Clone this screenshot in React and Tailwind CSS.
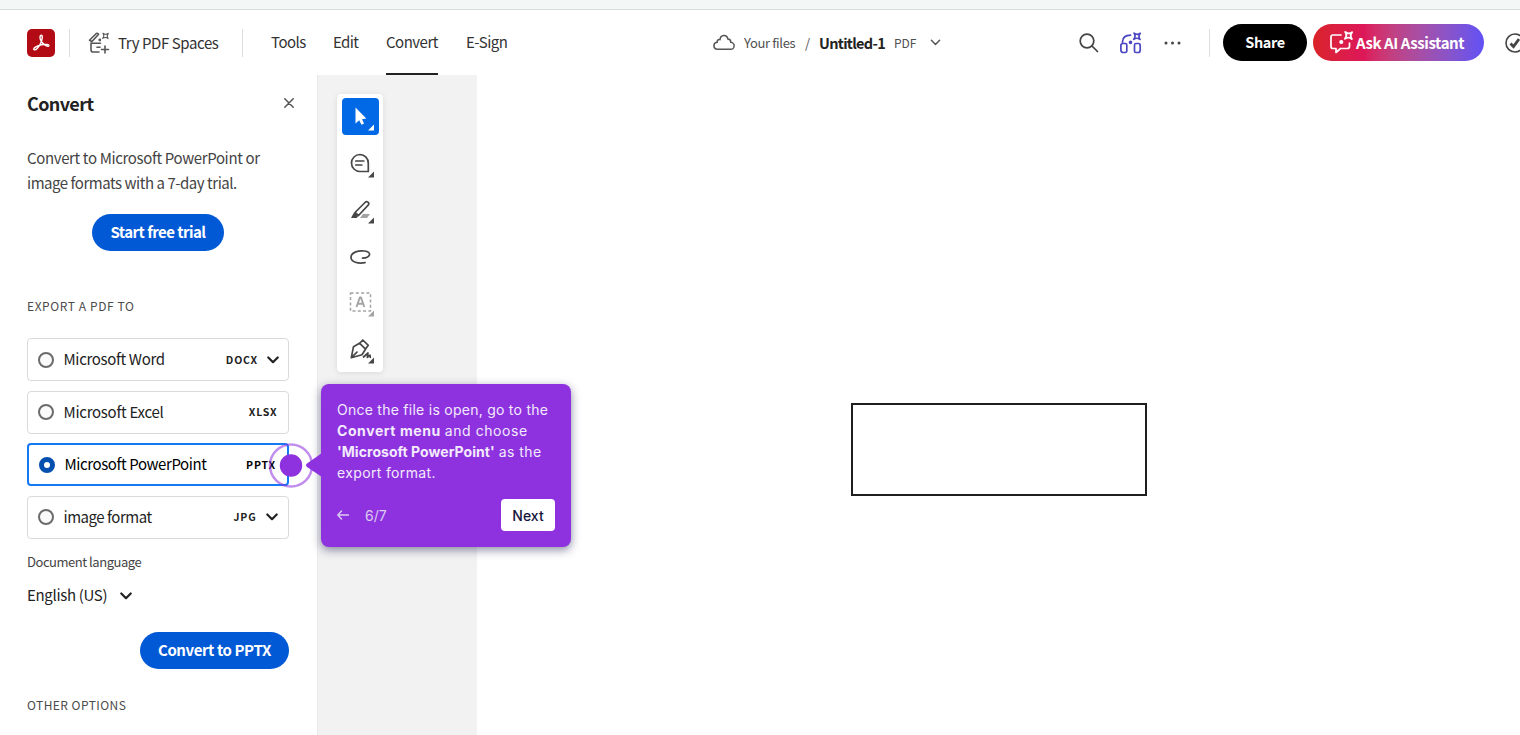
function T({ className = "", children }) {
  return <span className={"whitespace-nowrap " + className}>{children}</span>;
}

function Chevron({ className = "", width = 2.2 }) {
  return (
    <svg viewBox="0 0 12 8" className={"shrink-0 " + className} fill="none" stroke="currentColor" strokeWidth={width} strokeLinecap="round" strokeLinejoin="round">
      <path d="M1.3 1.5 6 6.2l4.7-4.7" />
    </svg>
  );
}

function Sparkle({ x, y, s = 1 }) {
  return <path transform={`translate(${x} ${y}) scale(${s})`} d="M-3-3.200Q0-.8 3.300-3 .8 0 3 3.200 0 .8-3.300 3-.8 0-3-3.200Z" />;
}

function Tool({ children, active, muted, corner = true }) {
  const tone = active ? "bg-[#0269e6] text-white" : muted ? "text-[#a3a3a3]" : "text-[#474747]";
  return (
    <button className={"block h-[37px] w-[37px] rounded-[4px] " + tone}>
      <svg width="37" height="37" viewBox="0 0 37 37" fill="none" stroke="currentColor" strokeWidth="1.7" strokeLinecap="round" strokeLinejoin="round">
        {children}
        {corner && <path d="M32 26.500v6h-6z" fill="currentColor" stroke="none" />}
      </svg>
    </button>
  );
}

function Option({ label, track, fmt, selected, chevron, chevronEnd = "" }) {
  const frame = selected ? "border-2 border-[#147af3] text-black px-[10px]" : "border border-[#dadada] text-[#222] pl-[10px] pr-[9px]";
  return (
    <div className={"flex h-[43px] w-[262px] items-center rounded-[4px] bg-white " + frame}>
      <span className={"h-4 w-4 shrink-0 rounded-full " + (selected ? "border-[5.5px] border-[#0550af] bg-white" : "border-2 border-[#6b6b6b] bg-[#fafafa]")} />
      <T className={"ml-[9.5px] text-[15px] " + track}>{label}</T>
      <T className={"ml-auto text-[10.5px] font-bold tracking-[0.8px] " + (chevron ? "" : selected ? "pr-px" : "pr-[1.5px]")}>{fmt}</T>
      {chevron && <Chevron className={"ml-[9px] h-2 w-3 " + chevronEnd} />}
    </div>
  );
}

export default function App() {
  return (
    <div className="relative flex h-[735px] w-[1520px] flex-col overflow-hidden bg-white font-['Noto_Sans_CJK_SC','Noto_Sans',sans-serif] text-[#333]">
      <div className="h-[10px] shrink-0 border-b border-[#d5dfdd] bg-[#f3f8f7]" />
      <header className="flex h-[65px] shrink-0 items-center overflow-hidden pl-[27px] *:shrink-0">
        <svg className="h-7 w-7" viewBox="0 0 28 28">
          <rect width="28" height="28" rx="5" fill="#b30b16" />
          <path d="M14.200 6.300c1.700-.2 1.200 3.800-.2 7.100-1.700 3.900-5.100 8.500-6.900 7.300-1.700-1.300 2.800-4.100 7.500-4.900 4.400-.7 7.500-.5 7.300.9-.4 1.900-4.900-.7-7.200-3.700-2-2.700-2.400-6.400-.5-6.700Z" fill="none" stroke="#fff" strokeWidth="1.400" />
        </svg>
        <i className="ml-[14px] h-7 w-px bg-[#dcdcdc]" />
        <svg className="ml-[18px] h-[22px] w-[22px]" viewBox="0 0 22 22" fill="none" stroke="#555" strokeWidth="1.600" strokeLinecap="round" strokeLinejoin="round">
          <path d="M1.500 8.200 8.300 1.500q1.600-.7 2.300.8L4 9.500ZM3 11v6.700q0 2.300 2 2.300h6M3 11.200h9.500M9 15.300h3M17 14v7M13.500 17.500h7" />
          <g strokeWidth="1.200"><Sparkle x={17.500} y={3.900} s={0.85} /></g>
          <circle cx="11.800" cy="8" r=".6" fill="#555" />
        </svg>
        <div className="ml-2 w-[124px] pt-px text-[15px] tracking-[-0.41px]"><T>Try PDF Spaces</T></div>
        <i className="h-7 w-px bg-[#dcdcdc]" />
        <nav className="flex h-full items-stretch pl-[28px] text-[15px] leading-[64px] tracking-[-0.5px]">
          <div className="w-[62px]"><T>Tools</T></div>
          <div className="w-[53px]"><T className="tracking-[-0.65px]">Edit</T></div>
          <div className="w-[52px] border-b-2 border-[#222]"><T>Convert</T></div>
          <div className="ml-7 w-[247px]"><T>E-Sign</T></div>
        </nav>
        <svg className="h-[17px] w-[22px]" viewBox="0 0 22 17" fill="none" stroke="#555" strokeWidth="1.500"><path d="M4.700 15.300h12.800a3.500 3.500 0 0 0 .3-7C17.800 6.300 16.500 5 14.900 5 13.900 0 7.500.2 7 5.600 5 5.200 4 6.500 4.200 8.300-.3 8.800-.2 15 4.700 15.300Z" /></svg>
        <div className="ml-[9px] w-[61px] text-[13px] tracking-[-0.36px] text-[#505050]"><T>Your files</T></div>
        <div className="w-[14px] text-[13px] text-[#505050]">/</div>
        <div className="w-[75px] text-[14.5px] font-bold tracking-[-0.7px] text-[#222]"><T>Untitled-1</T></div>
        <div className="w-[36px] text-[12px] text-[#505050]"><T>PDF</T></div>
        <Chevron className="h-[7px] w-[11px] text-[#555]" width={1.7} />
        <svg className="ml-[138px] h-5 w-5" viewBox="0 0 20 20" fill="none" stroke="#444" strokeWidth="1.700" strokeLinecap="round"><circle cx="8" cy="8" r="6.800" /><path d="m13 13 5.500 5.500" /></svg>
        <svg className="ml-[21px] h-[22px] w-[22px]" viewBox="0 0 22 22" fill="none" stroke="#4b46c2" strokeWidth="1.700" strokeLinejoin="round" strokeLinecap="round">
          <path d="M2.500 11V9.500Q3 3.300 10.500 3.200M.9 13.500q0-2 2-2h2.400q1.500 0 1.500 1.500v6q0 1.500-1.500 1.500H3.400Q.9 20.500.9 18ZM14.500 13q0-1.500 1.500-1.500h2.500q1.700 0 1.700 2V18q0 2.500-2 2.500H16q-1.500 0-1.500-1.500Z" />
          <Sparkle x={17} y={4.300} s={1} />
          <circle cx="10.500" cy="10.300" r="1" fill="#4b46c2" />
        </svg>
        <svg className="ml-[22px] h-1 w-[17px]" viewBox="0 0 17 4" fill="#444"><circle cx="2" cy="2" r="1.500" /><circle cx="8.500" cy="2" r="1.500" /><circle cx="15" cy="2" r="1.500" /></svg>
        <i className="ml-[28px] h-7 w-px bg-[#dcdcdc]" />
        <button className="ml-[13px] h-[37px] w-[84px] rounded-full bg-black pb-px text-[14.5px] font-bold tracking-[-0.4px] text-white"><T>Share</T></button>
        <button className="ml-[6px] flex h-[37px] w-[171px] items-center rounded-full bg-linear-to-r from-[#d92328] via-[#dd1759] via-30% to-[#6150f5] pl-[16px] text-[15px] font-bold text-white">
          <svg className="h-6 w-6 shrink-0" viewBox="0 0 24 24" fill="none" stroke="white" strokeWidth="1.700" strokeLinejoin="round" strokeLinecap="round"><path d="M12 4H4Q2 4 2 6v9.500q0 2 2 2h3v4l4.500-4H18q2.500 0 2.500-2V12" /><Sparkle x={19.500} y={4.500} s={1.1} /><circle cx="12.300" cy="11" r="1.200" fill="white" /></svg>
          <T className="ml-[3px] pt-px tracking-[-0.42px]">Ask AI Assistant</T>
        </button>
        <svg className="ml-[21px] h-5 w-5" viewBox="0 0 20 20" fill="none" stroke="#444"><circle cx="10" cy="10" r="9" strokeWidth="1.600" /><path d="m5.500 10.500 3 3L14 6" strokeWidth="2.800" /></svg>
      </header>
      <div className="flex flex-1">
        <aside className="h-[660px] w-[317px] shrink-0 pl-[27px]">
          <div className="flex h-[56px] w-[267px] items-center justify-between text-[18px] font-bold text-[#222]">
            <T className="tracking-[-0.62px]">Convert</T>
            <svg className="h-[10px] w-[10px]" viewBox="0 0 10 10" stroke="#555" strokeWidth="1.500" strokeLinecap="round"><path d="m.8.800 8.400 8.400M9.200.8.800 9.200" /></svg>
          </div>
          <div className="mt-[14px] text-[15px] leading-[26px] text-[#444]">
            <div><T className="tracking-[-0.36px]">Convert to Microsoft PowerPoint or</T></div>
            <div className="-mt-px"><T className="tracking-[-0.46px]">image formats with a 7-day trial.</T></div>
          </div>
          <button className="mt-[18px] ml-[65px] block h-[37px] w-[132px] rounded-full bg-[#0259d6] pb-px text-[15px] font-bold tracking-[-0.54px] text-white"><T>Start free trial</T></button>
          <div className="mt-[45px] h-[20px] text-[12px] leading-[20px] tracking-[0.58px] text-[#4b4b4b]"><T>EXPORT A PDF TO</T></div>
          <div className="mt-[22px] flex flex-col gap-[9.500px]">
            <Option label="Microsoft Word" track="tracking-[-0.34px]" fmt="DOCX" chevron />
            <Option label="Microsoft Excel" track="tracking-[-0.27px]" fmt="XLSX" />
            <Option label="Microsoft PowerPoint" track="tracking-[-0.4px]" fmt="PPTX" selected />
            <Option label="image format" track="tracking-[-0.47px]" fmt="JPG" chevron chevronEnd="mr-[1.5px]" />
          </div>
          <div className="mt-[13px] h-5 text-[13px] leading-5 tracking-[-0.47px] text-[#444]"><T>Document language</T></div>
          <div className="mt-[14px] flex h-5 items-center text-[15px] tracking-[-0.32px] text-[#222]"><div className="w-[93px]"><T>English (US)</T></div><Chevron className="h-2 w-3" /></div>
          <button className="mt-[26px] ml-[113px] block h-[37px] w-[149px] rounded-full bg-[#0259d6] text-[15px] font-bold tracking-[-0.42px] text-white"><T>Convert to PPTX</T></button>
          <div className="mt-[26px] h-5 text-[12px] leading-5 tracking-[0.45px] text-[#4b4b4b]"><T>OTHER OPTIONS</T></div>
        </aside>
        <section className="w-[160px] shrink-0 border-l border-[#e9e9e9] bg-[#f2f2f2] pt-[19px] pl-[19px]">
          <div className="flex h-[278px] w-[46px] flex-col gap-[9.500px] rounded-[4px] bg-white pt-[4px] pl-[4.500px] shadow-[0_1px_6px_rgba(0,0,0,0.1)]">
            <Tool active><path d="M13.500 9.500v16l3.700-3.300 2.300 4.500 2.500-1.300-2-4.200 4.300-.7Z" fill="currentColor" stroke="none" /></Tool>
            <Tool><path d="M18 9.500a8.500 8.500 0 1 0 0 17h8.300v-8.300a8.500 8.500 0 0 0-8.300-8.700ZM13.800 16h8M13.800 20h6" /></Tool>
            <Tool><path d="m13 21.500 10.500-10.500q1.200-1 2.500.2 1.500 1.300.4 2.600L16.500 24.500Z" /><path d="M9 27 12 21.500l4.200 3.500-1.500 2Z" fill="currentColor" stroke="none" /><path d="M18 27l3-4h7l-3 4Z" fill="#a3a3a3" stroke="none" /></Tool>
            <Tool corner={false}><path d="M23 24.700c-7 1.300-14-.8-14-5.300 0-5.500 8-7.200 13.500-6.400 7.500 1 6.500 6.600-2 7.200" /></Tool>
            <Tool muted><rect x="8.500" y="9" width="20" height="18" strokeDasharray="3 2.300" strokeLinecap="butt" strokeWidth="1.500" /><path d="m14.500 23 3.300-9.500h1.200l3.300 9.500M16 19.800h5" strokeLinecap="butt" strokeWidth="1.900" /></Tool>
            <Tool><path d="m9.300 26.700 2.200-11 6-3.500 6 6-3.500 5.500Zm0 0 5.700-5.500M18 12 20.800 9l5.500 5.300-3 4M21.500 26l4.500-4-.7 4.300 2.700-2.200.3 2.200" /></Tool>
          </div>
        </section>
        <main className="flex-1 bg-white pt-[328px] pl-[374px]"><div className="h-[93px] w-[296px] border-2 border-[#1f1f1f]" /></main>
      </div>
      <svg className="absolute top-[440px] left-[266px] h-[50px] w-[60px]" viewBox="0 0 60 50"><circle cx="25" cy="25.500" r="21" fill="none" stroke="#8e32e0" strokeOpacity=".55" strokeWidth="2.500" /><circle cx="25" cy="25.500" r="11.200" fill="#8e32e0" /></svg>
      <div className="absolute top-[384px] left-[321px] h-[163px] w-[250px] rounded-[8px] bg-[#8e32e0] px-4 pt-[15px] font-['Inter',sans-serif] text-[14px] leading-[21px] text-[#f3eafc] shadow-[0_3px_10px_rgba(25,25,80,0.5)]">
        <svg className="absolute top-[69px] -left-[15px] h-6 w-4" viewBox="0 0 16 24" fill="#8e32e0"><path d="M16 0 1 10.500q-2 1.700 0 3.400L16 24Z" /></svg>
        <div className="tracking-[0.26px]">Once the file is open, go to the</div>
        <div className="whitespace-nowrap"><T className="font-bold tracking-[0.58px]">Convert menu</T> <T className="tracking-[0.56px]">and choose</T></div>
        <div className="whitespace-nowrap"><T className="font-bold tracking-[0.04px]">'Microsoft PowerPoint'</T> <T className="tracking-[0.45px]">as the</T></div>
        <div className="tracking-[0.36px]">export format.</div>
        <div className="mt-[16px] flex h-8 items-center text-[#dccbf0]">
          <svg className="h-[10px] w-3" viewBox="0 0 12 10" fill="none" stroke="currentColor" strokeWidth="1.400" strokeLinecap="round" strokeLinejoin="round"><path d="M11.500 5H.8M4.500 1 .8 5l3.700 4" /></svg>
          <T className="ml-4">6/7</T>
          <button className="ml-auto h-8 w-[54px] rounded-[4px] bg-white font-medium text-[#14143c]">Next</button>
        </div>
      </div>
    </div>
  );
}
